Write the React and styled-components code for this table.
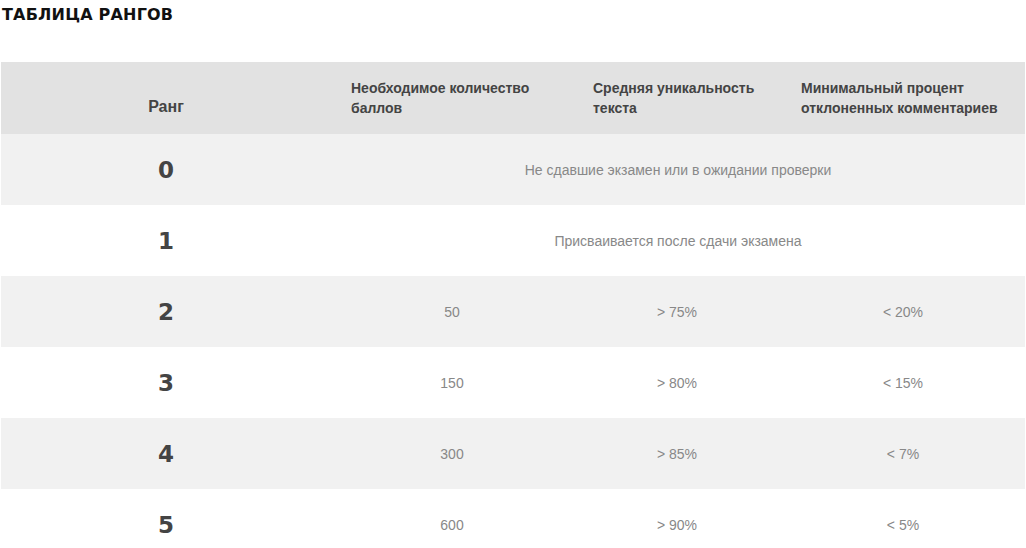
import React from 'react'
import styled, { createGlobalStyle } from 'styled-components'

const GlobalStyle = createGlobalStyle`
    html, body { margin: 0; padding: 0; background: #fff; }
    body { font-family: "Liberation Sans", Arial, sans-serif; }
`

const columns = '330px 242px 208px 244px'

const headers = [
    { text: 'Ранг', center: true },
    { text: 'Необходимое количество баллов' },
    { text: 'Средняя уникальность текста' },
    { text: 'Минимальный процент отклоненных комментариев' },
]

const ranks = [
    { rank: 0, note: 'Не сдавшие экзамен или в ожидании проверки' },
    { rank: 1, note: 'Присваивается после сдачи экзамена' },
    { rank: 2, values: ['50', '> 75%', '< 20%'] },
    { rank: 3, values: ['150', '> 80%', '< 15%'] },
    { rank: 4, values: ['300', '> 85%', '< 7%'] },
    { rank: 5, values: ['600', '> 90%', '< 5%'] },
]

function App() {
    return (
        <Page>
            <GlobalStyle />
            <Title>Таблица рангов</Title>
            <Table>
                <HeadRow>
                    {headers.map((h) => (
                        <HeadCell key={h.text} $center={h.center}>{h.text}</HeadCell>
                    ))}
                </HeadRow>
                {ranks.map((r, i) => (
                    <Row key={r.rank} $striped={i % 2 === 0}>
                        <RankCell>{r.rank}</RankCell>
                        {r.note ? (
                            <Cell $span={3}>{r.note}</Cell>
                        ) : (
                            r.values.map((v, j) => <Cell key={j}>{v}</Cell>)
                        )}
                    </Row>
                ))}
            </Table>
        </Page>
    )
}

const Page = styled.div`
    padding: 0 1px;
    width: 1024px;
`

const Title = styled.h2`
    margin: 0;
    padding: 5px 0 0 1px;
    height: 62px;
    box-sizing: border-box;
    font-family: "DejaVu Sans", sans-serif;
    font-weight: 700;
    font-size: 16px;
    letter-spacing: 0.2px;
    text-transform: uppercase;
    color: #111;
`

const Table = styled.div`
    display: flex;
    flex-direction: column;
`

const HeadRow = styled.div`
    display: grid;
    grid-template-columns: ${columns};
    height: 72px;
    background: #e2e2e2;
`

const HeadCell = styled.div`
    display: flex;
    align-items: flex-end;
    justify-content: ${(p) => (p.$center ? 'center' : 'flex-start')};
    padding: 0 20px ${(p) => (p.$center ? '17px' : '16px')};
    font-size: ${(p) => (p.$center ? '16px' : '14px')};
    font-weight: 700;
    line-height: 20px;
    color: #444;
`

const Row = styled.div`
    display: grid;
    grid-template-columns: ${columns};
    height: 71px;
    background: ${(p) => (p.$striped ? '#f1f1f1' : '#fff')};
`

const RankCell = styled.div`
    display: flex;
    align-items: center;
    justify-content: center;
    font-family: "DejaVu Sans", sans-serif;
    font-weight: 700;
    font-size: 23px;
    color: #444;
`

const Cell = styled.div`
    grid-column: span ${(p) => p.$span || 1};
    display: flex;
    align-items: center;
    justify-content: center;
    font-size: 14px;
    color: #888;
`

export default App
